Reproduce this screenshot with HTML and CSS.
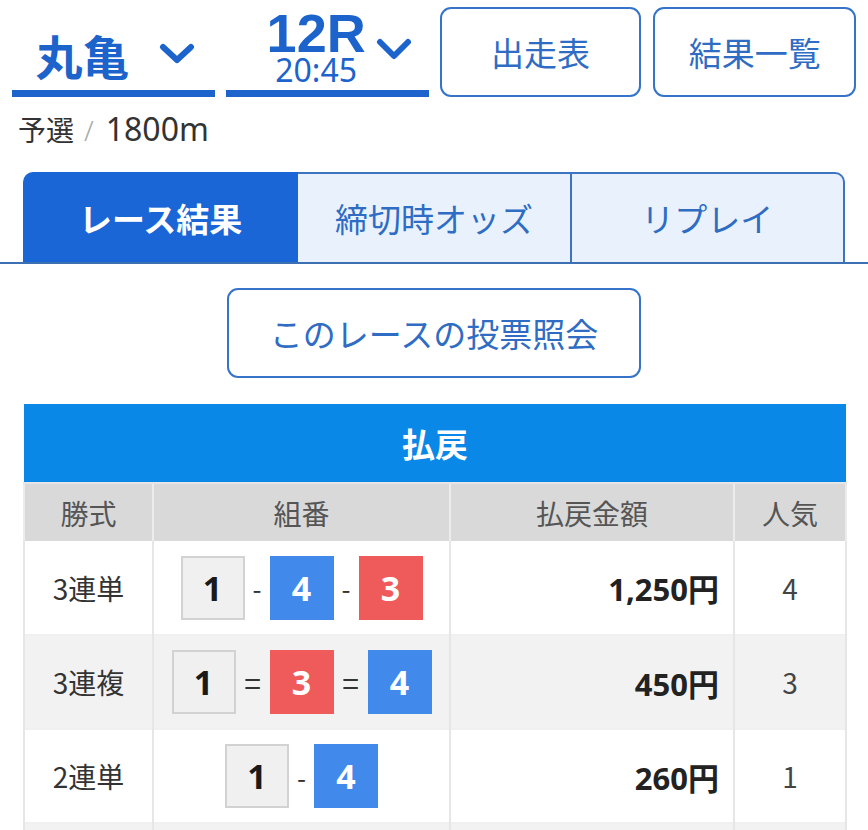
FILE: index.html
```html
<!DOCTYPE html>
<html lang="ja">
<head>
<meta charset="utf-8">
<link rel="stylesheet" href="styles.css">
</head>
<body>
<header class="top">
  <div class="sel sel-place">
    <span class="place">丸亀</span>
    <svg class="chev" width="36" height="22" viewBox="0 0 36 22"><path d="M4 4 L18 17 L32 4" fill="none" stroke="#1c63cc" stroke-width="6" stroke-linecap="round" stroke-linejoin="round"/></svg>
  </div>
  <div class="sel sel-race">
    <div class="race-stack">
      <span class="race-no">12R</span>
      <span class="race-time">20:45</span>
    </div>
    <svg class="chev chev-race" width="36" height="24" viewBox="0 0 36 24"><path d="M4 5 L18 19 L32 5" fill="none" stroke="#1c63cc" stroke-width="6" stroke-linecap="round" stroke-linejoin="round"/></svg>
  </div>
  <a class="hbtn">出走表</a>
  <a class="hbtn">結果一覧</a>
</header>

<div class="info">予選<span class="slash">/</span><span class="dist">1800m</span></div>

<nav class="tabs">
  <div class="tab active">レース結果</div>
  <div class="tab">締切時オッズ</div>
  <div class="tab">リプレイ</div>
</nav>

<div class="vote-wrap">
  <a class="vote-btn">このレースの投票照会</a>
</div>

<table class="pay">
  <colgroup>
    <col class="c1"><col class="c2"><col class="c3"><col class="c4">
  </colgroup>
  <thead>
    <tr><th colspan="4" class="pay-title">払戻</th></tr>
    <tr class="colhead"><th>勝式</th><th>組番</th><th>払戻金額</th><th>人気</th></tr>
  </thead>
  <tbody>
    <tr>
      <td class="kind">3連単</td>
      <td class="combo"><span class="box b1">1</span><span class="sep">-</span><span class="box b4">4</span><span class="sep">-</span><span class="box b3">3</span></td>
      <td class="amt">1,250円</td>
      <td class="pop">4</td>
    </tr>
    <tr class="alt">
      <td class="kind">3連複</td>
      <td class="combo"><span class="box b1">1</span><span class="sep eq">=</span><span class="box b3">3</span><span class="sep eq">=</span><span class="box b4">4</span></td>
      <td class="amt">450円</td>
      <td class="pop">3</td>
    </tr>
    <tr>
      <td class="kind">2連単</td>
      <td class="combo"><span class="box b1">1</span><span class="sep">-</span><span class="box b4">4</span></td>
      <td class="amt">260円</td>
      <td class="pop">1</td>
    </tr>
    <tr class="alt tail">
      <td></td><td></td><td></td><td></td>
    </tr>
  </tbody>
</table>
</body>
</html>
```

FILE: styles.css
```css
* { box-sizing: border-box; }
html, body { margin: 0; padding: 0; background: #fff; }
body {
  font-family: "Noto Sans CJK JP", "Noto Sans", sans-serif;
  color: #333;
  overflow: hidden;
  height: 830px;
}

.top {
  display: flex;
  gap: 11px;
  padding: 7px 12px 0;
  height: 97px;
}
.sel {
  width: 203px;
  border-bottom: 7px solid #1c63cc;
  display: flex;
  align-items: center;
  justify-content: center;
  color: #1c63cc;
  align-self: flex-end;
}
.sel-place { height: 83px; gap: 30px; padding-top: 4px; padding-left: 4px; }
.place { font-size: 47px; font-weight: 700; line-height: 1; }
.sel-race { height: 97px; margin-top: -7px; gap: 10px; align-items: flex-start; padding-left: 24px; }
.race-stack { display: flex; flex-direction: column; align-items: center; }
.race-no { font-size: 54px; font-weight: 700; line-height: 54px; margin-top: 6px; font-family: "Liberation Sans", sans-serif; }
.race-time { font-size: 32px; line-height: 30px; margin-top: -5px; font-family: "Noto Sans", sans-serif; }
.chev-race { margin-top: 37px; }
.hbtn {
  width: 202px;
  height: 90px;
  border: 2px solid #3574c9;
  border-radius: 11px;
  display: flex;
  align-items: center;
  justify-content: center;
  font-size: 33px;
  color: #2f6cc4;
}
.hbtn + .hbtn { width: 203px; margin-left: 1px; }

.info {
  font-size: 28px;
  line-height: 40px;
  padding: 12px 0 0 18px;
  color: #333;
}
.slash { color: #aaa; margin: 0 12px 0 10px; font-weight: 300; font-family: "Noto Sans", sans-serif; }
.dist { font-family: "Noto Sans", sans-serif; font-size: 32px; }

.tabs {
  margin-top: 22px;
  display: flex;
  padding: 0 23px;
  border-bottom: 2px solid #3d6fb3;
}
.tab {
  flex: 1;
  height: 90px;
  display: flex;
  align-items: center;
  justify-content: center;
  font-size: 33px;
  color: #2f6cc4;
  background: #e9f2fc;
  border: 2px solid #3c73c2;
  border-bottom: none;
  border-left: none;
}
.tab:first-child { border-top-left-radius: 10px; border-left: 2px solid #1a66d6; }
.tab:last-child { border-top-right-radius: 10px; }
.tab.active {
  background: #1a66d6;
  color: #fff;
  font-weight: 700;
  border-color: #1a66d6;
}

.vote-wrap {
  display: flex;
  justify-content: center;
  padding-top: 24px;
}
.vote-btn {
  width: 414px;
  height: 90px;
  border: 2px solid #3574c9;
  border-radius: 11px;
  display: flex;
  align-items: center;
  justify-content: center;
  font-size: 33px;
  color: #2f6cc4;
}

.pay {
  margin: 26px 0 0 23px;
  width: 822px;
  border-collapse: collapse;
  table-layout: fixed;
}
.c1 { width: 129px; }
.c2 { width: 297px; }
.c3 { width: 284px; }
.c4 { width: 112px; }
.pay th, .pay td { padding: 0; }
.pay-title {
  background: #0a88e8;
  color: #fff;
  font-size: 33px;
  font-weight: 700;
  height: 79px;
  border-bottom: 2px solid #e6e6e6;
}
.colhead th {
  background: #d9d9d9;
  color: #555;
  font-weight: 400;
  font-size: 28px;
  height: 58px;
  border-left: 2px solid #ececec;
  border-right: 2px solid #ececec;
}
.pay td {
  height: 94px;
  border: 2px solid #e6e6e6;
  border-top: none;
  border-bottom: none;
}
.pay tbody tr { border-bottom: 2px solid #f0f0f0; }
.pay tr.alt td { background: #f2f2f2; }
.kind { text-align: center; font-size: 28px; color: #333; }
.combo { text-align: center; white-space: nowrap; font-size: 0; }
.box {
  display: inline-flex;
  width: 64px;
  height: 64px;
  align-items: center;
  justify-content: center;
  font-size: 34px;
  font-weight: 700;
  vertical-align: middle;
  font-family: "Noto Sans", sans-serif;
}
.b1 { background: #f0f0f0; border: 2px solid #d2d2d2; color: #1a1a1a; }
.b4 { background: #418aeb; color: #fff; }
.b3 { background: #ef5b5b; color: #fff; }
.sep {
  display: inline-block;
  font-size: 26px;
  color: #333;
  width: 25px;
  text-align: center;
  vertical-align: middle;
}
.sep.eq { width: 34px; font-size: 30px; }
.amt {
  text-align: right;
  padding-right: 14px !important;
  font-size: 31px;
  font-weight: 700;
  color: #222;
  font-family: "Noto Sans", "Noto Sans CJK JP", sans-serif;
}
.pop { text-align: center; font-size: 28px; color: #444; }
```
